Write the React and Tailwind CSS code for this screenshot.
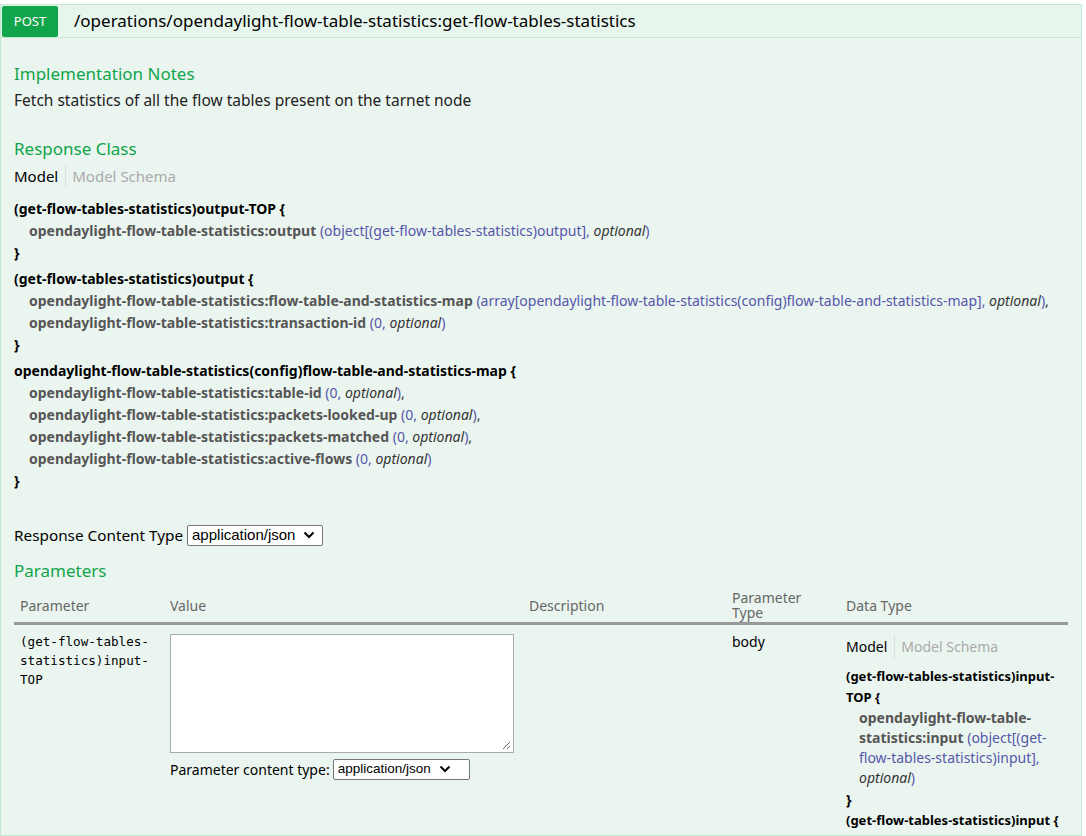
import React from 'react';

const Chevron = () => (
  <svg width="12" height="8" viewBox="0 0 12 8" className="ml-[8px]">
    <path d="M1.5 1.5 L6 6 L10.5 1.5" fill="none" stroke="#000" strokeWidth="2" />
  </svg>
);

const FakeSelect = ({ w, size }) => (
  <div className={`inline-flex items-center h-[21px] pl-[4px] bg-white border border-[#767676] rounded-[2px] text-black font-['Liberation_Sans',sans-serif] ${w} ${size}`}>
    <span>application/json</span>
    <Chevron />
  </div>
);

const ModelTabs = ({ size }) => (
  <div className={`flex items-center h-[26px] ${size}`}>
    <span className="text-black pr-[7px]">Model</span>
    <span className="flex items-center h-[24px] border-l border-[#dddddd] pl-[6px] text-[#aaaaaa]">Model Schema</span>
  </div>
);

const Prop = ({ name, type, last }) => (
  <div className="pl-[15px]">
    <span className="font-bold text-[#555555]">{name}</span>{' '}
    <span className="text-[#5555aa]">({type}, </span>
    <span className="italic text-[#333333]">optional</span>
    <span className="text-[#5555aa]">)</span>
    {last ? '' : ','}
  </div>
);

const App = () => {
  const params = [
    { w: 'w-[150px]', label: 'Parameter' },
    { w: 'w-[359px]', label: 'Value' },
    { w: 'w-[203px]', label: 'Description' },
    { w: 'w-[114px]', label: 'Parameter Type' },
    { w: 'w-[228px]', label: 'Data Type' },
  ];

  return (
    <div className="pt-[4px] font-['Noto_Sans',sans-serif] text-[#333333]">
      <div className="w-[1082px]">
        {/* heading bar */}
        <div className="flex items-center h-[34px] bg-[#e7f6ec] border border-[#c3e8d1]">
          <span className="flex items-center justify-center ml-[1px] w-[56px] h-[31px] bg-[#10a54a] rounded-[2px] text-white text-[13px] pt-[1px]">POST</span>
          <span className="ml-[16px] text-[17px] text-black">/operations/opendaylight-flow-table-statistics:get-flow-tables-statistics</span>
        </div>

        {/* content */}
        <div className="bg-[#ebf5f0] border border-t-0 border-[#c3e8d1] px-[13px] pt-[24px] h-[798px] overflow-hidden">
          <h4 className="text-[17px] leading-[24px] text-[#10a54a]">Implementation Notes</h4>
          <p className="text-[15.5px] leading-[20px] text-[#222222] mt-[4px]">Fetch statistics of all the flow tables present on the tarnet node</p>

          <h4 className="text-[17px] leading-[24px] text-[#10a54a] mt-[27px]">Response Class</h4>
          <div className="mt-[2px]">
            <ModelTabs size="text-[15px]" />
          </div>

          <div className="mt-[9px] text-[14px] leading-[22px]">
            <div className="mb-[4px]">
              <div className="font-bold text-black">(get-flow-tables-statistics)output-TOP {'{'}</div>
              <Prop name="opendaylight-flow-table-statistics:output" type="object[(get-flow-tables-statistics)output]" last />
              <div className="font-bold text-black">{'}'}</div>
            </div>
            <div className="mb-[4px]">
              <div className="font-bold text-black">(get-flow-tables-statistics)output {'{'}</div>
              <Prop name="opendaylight-flow-table-statistics:flow-table-and-statistics-map" type="array[opendaylight-flow-table-statistics(config)flow-table-and-statistics-map]" />
              <Prop name="opendaylight-flow-table-statistics:transaction-id" type="0" last />
              <div className="font-bold text-black">{'}'}</div>
            </div>
            <div>
              <div className="font-bold text-black">opendaylight-flow-table-statistics(config)flow-table-and-statistics-map {'{'}</div>
              <Prop name="opendaylight-flow-table-statistics:table-id" type="0" />
              <Prop name="opendaylight-flow-table-statistics:packets-looked-up" type="0" />
              <Prop name="opendaylight-flow-table-statistics:packets-matched" type="0" />
              <Prop name="opendaylight-flow-table-statistics:active-flows" type="0" last />
              <div className="font-bold text-black">{'}'}</div>
            </div>
          </div>

          <div className="flex items-center mt-[32px] text-[15.3px] text-black">
            <span className="mr-[4px]">Response Content Type</span>
            <FakeSelect w="w-[136px]" size="text-[15px]" />
          </div>

          <h4 className="text-[17px] leading-[24px] text-[#10a54a] mt-[12px]">Parameters</h4>

          {/* parameters table */}
          <div className="w-[1054px] mt-[6px]">
            <div className="flex items-center h-[36px] border-b-[3px] border-[#999999] text-[14px] text-[#666666]">
              {params.map(p => (
                <div key={p.label} className={`${p.w} px-[6px] leading-[15px]`}>
                  {p.label === 'Parameter Type' ? (<>Parameter<br />Type</>) : p.label}
                </div>
              ))}
            </div>
            <div className="flex items-start pt-[6px] text-[14px]">
              <div className="w-[150px] px-[6px] pt-[1px] font-['DejaVu_Sans_Mono',monospace] text-[12.6px] leading-[19px] text-black">
                (get-flow-tables-<br />statistics)input-<br />TOP
              </div>
              <div className="w-[359px] px-[6px] pt-[3px]">
                <div className="w-[344px] h-[119px] bg-white border border-[#aaaaaa] relative">
                  <svg width="10" height="10" viewBox="0 0 10 10" className="absolute right-[2px] bottom-[2px]">
                    <path d="M9 2 L2 9 M9 6 L6 9" stroke="#666666" strokeWidth="1" />
                  </svg>
                </div>
                <div className="flex items-center mt-[6px] text-black">
                  <span className="mr-[3px]">Parameter content type:</span>
                  <FakeSelect w="w-[137px]" size="text-[13.5px]" />
                </div>
              </div>
              <div className="w-[203px] px-[6px]"></div>
              <div className="w-[114px] px-[6px] pt-[1px] text-black leading-[20px]">body</div>
              <div className="w-[228px] px-[6px] pt-[3px]">
                <ModelTabs size="text-[14px]" />
                <div className="mt-[6px] leading-[21px]">
                  <div className="font-bold text-black text-[13px] whitespace-nowrap">(get-flow-tables-statistics)input-<br />TOP {'{'}</div>
                  <div className="pl-[13px] leading-[20px]">
                    <span className="font-bold text-[#555555]">opendaylight-flow-table-statistics:input</span>{' '}
                    <span className="text-[#5555aa]">(object[(get-flow-tables-statistics)input], </span>
                    <span className="italic text-[#333333]">optional</span>
                    <span className="text-[#5555aa]">)</span>
                  </div>
                  <div className="font-bold text-black mt-[1px]">{'}'}</div>
                  <div className="font-bold text-black text-[13px] whitespace-nowrap">(get-flow-tables-statistics)input {'{'}</div>
                  <div className="pl-[13px] leading-[20px]">
                    <span className="font-bold text-[#555555]">opendaylight-flow-table-statistics:node</span>
                  </div>
                </div>
              </div>
            </div>
          </div>
        </div>
      </div>
    </div>
  );
};

export default App;
